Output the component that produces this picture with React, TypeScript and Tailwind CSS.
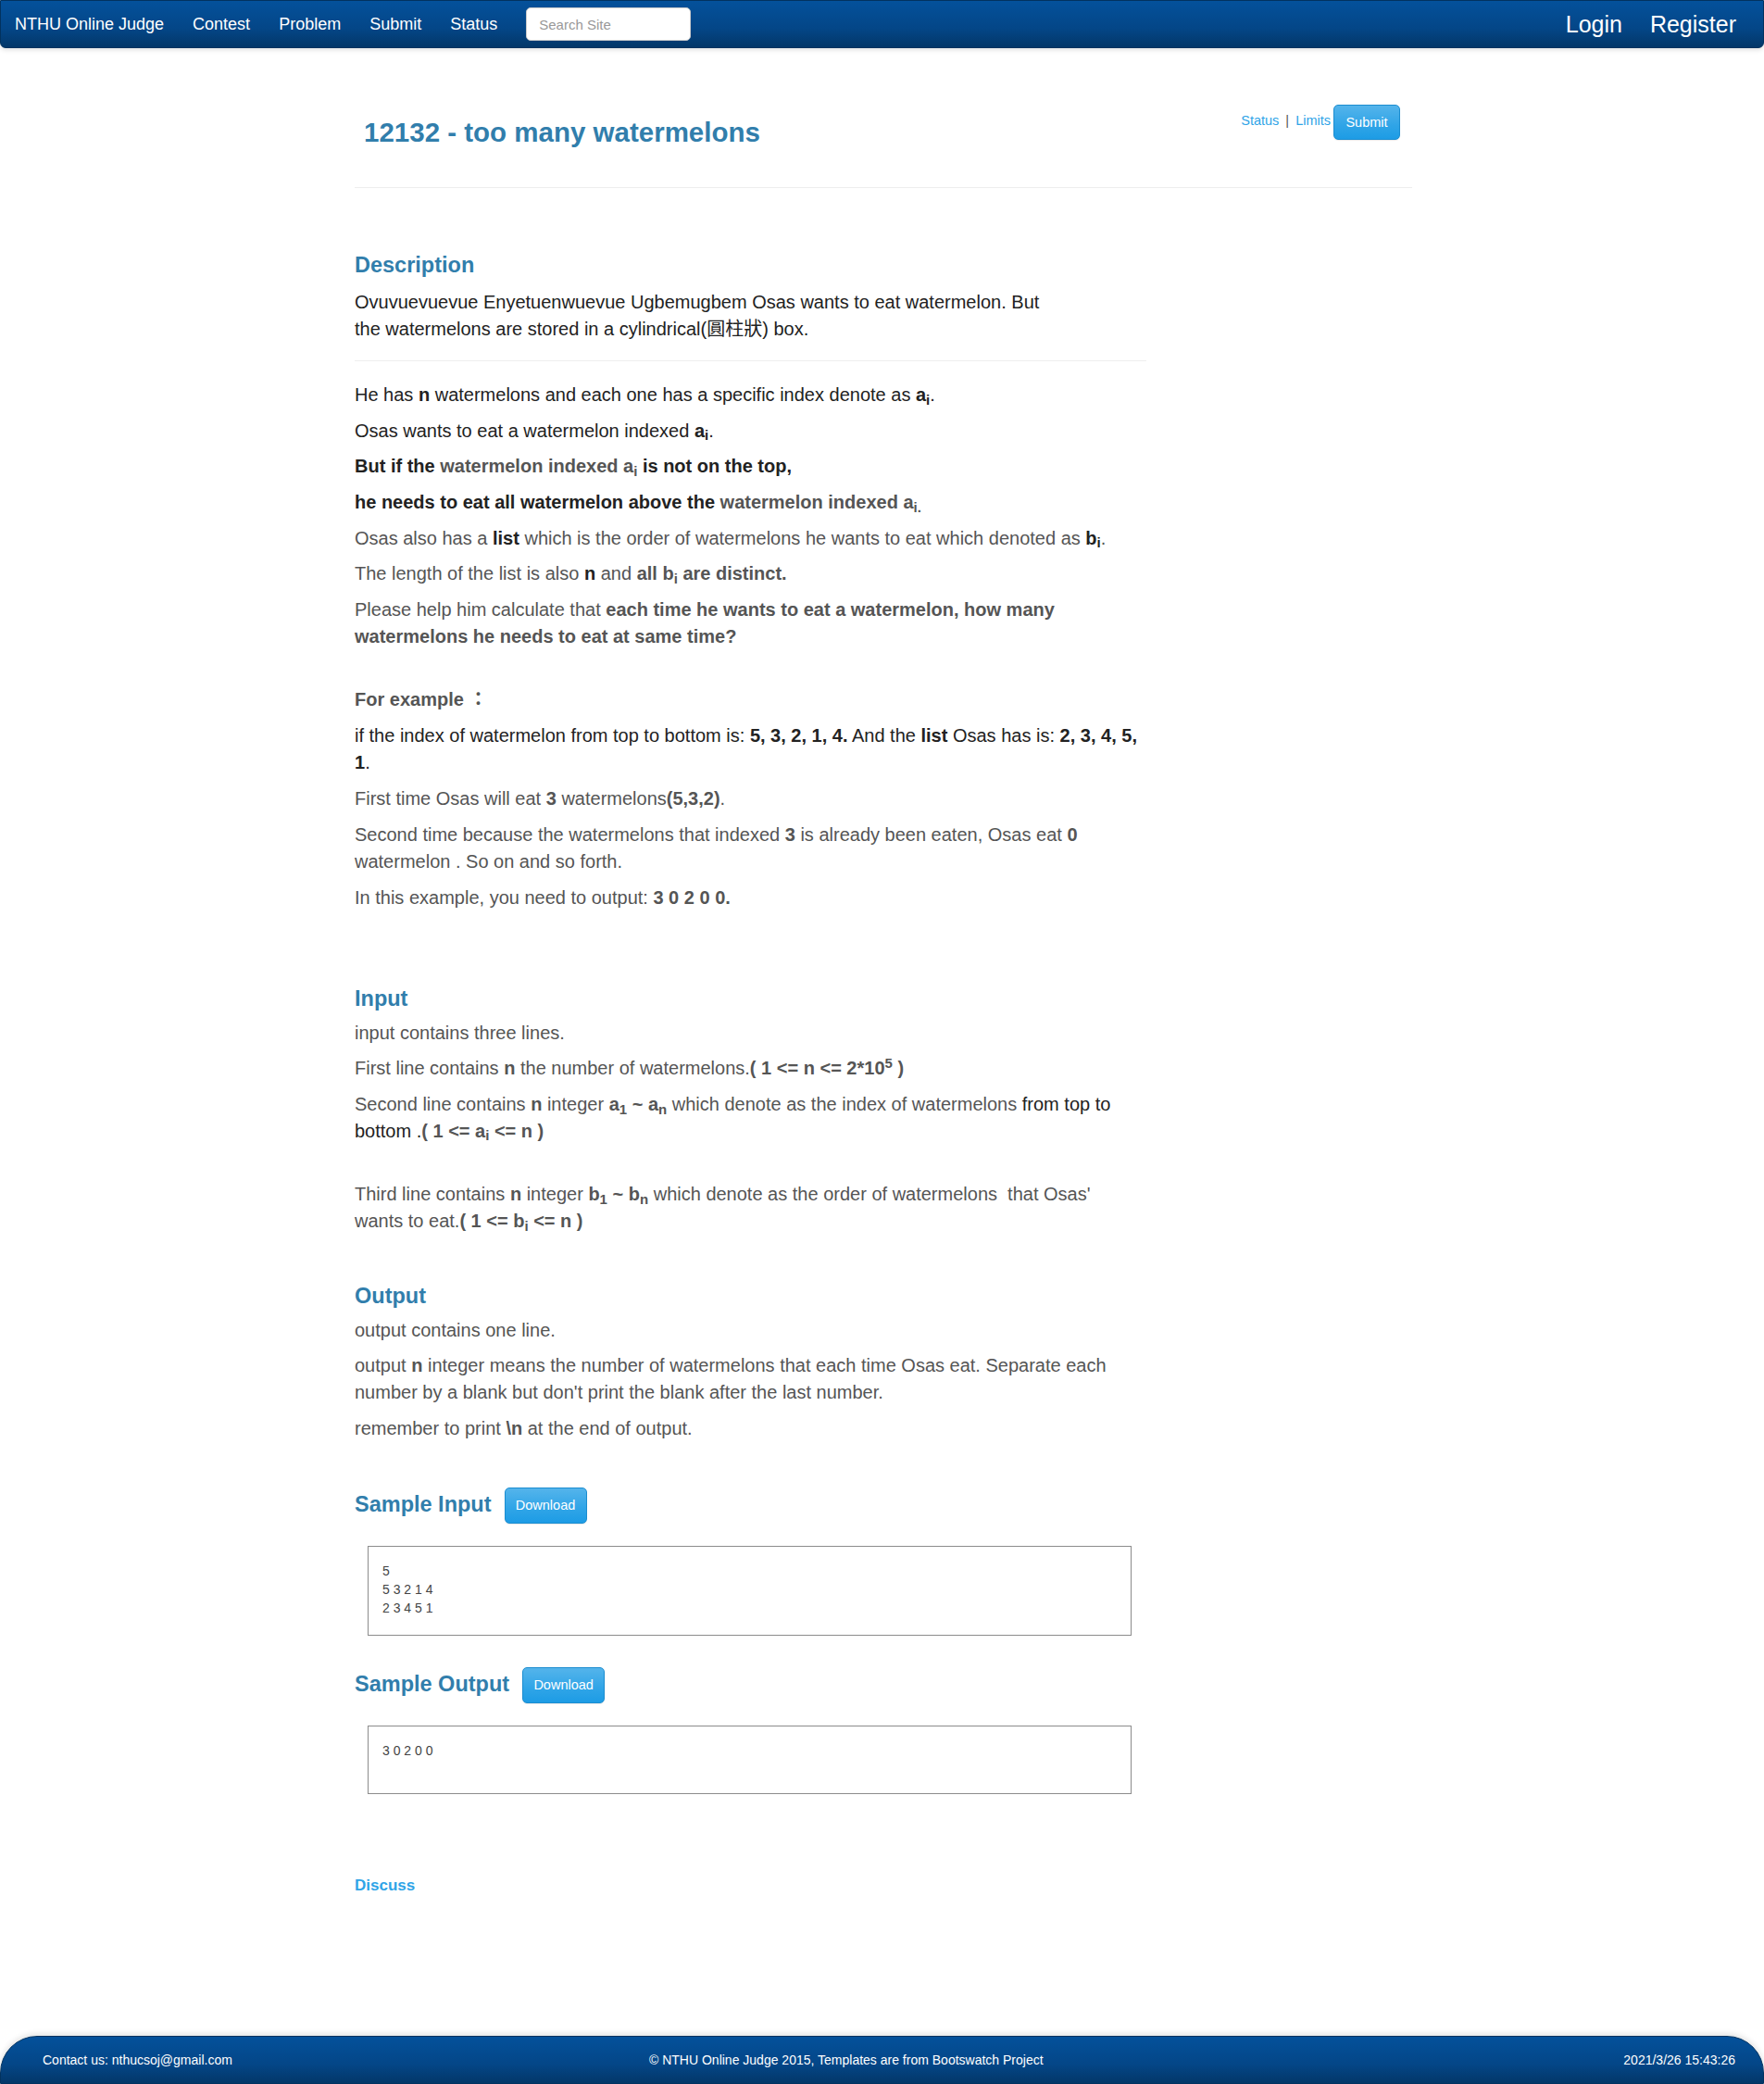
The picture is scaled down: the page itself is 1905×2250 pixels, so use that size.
import React from 'react';

const navGradient = 'bg-[linear-gradient(#04519b,#044687_60%,#033769)]';
const btnBlue =
  'rounded-[5px] border border-[#1b8dd0] bg-[linear-gradient(#54b4eb,#2fa4e7_60%,#1d9ce5)] text-white text-[14.5px] shadow-[0_1px_1px_rgba(0,0,0,0.08)]';

const Heading = ({ children, className = '' }: { children: React.ReactNode; className?: string }) => (
  <h4 className={`text-[23.5px] leading-[28px] font-bold text-[#317eac] ${className}`}>{children}</h4>
);

const Sample = ({ title, text, pad }: { title: string; text: string; pad: string }) => (
  <>
    <div className="flex items-center gap-[14px]">
      <Heading>{title}</Heading>
      <button className={`mt-[2px] h-[39px] w-[89px] ${btnBlue}`}>Download</button>
    </div>
    <div
      className={`mt-[24px] ml-[14px] w-[825px] border border-[#8c8c8c] pl-[15px] text-[14px] leading-[20px] whitespace-pre text-[#444] ${pad}`}
    >
      {text}
    </div>
  </>
);

export default function App() {
  return (
    <div className="flex min-h-[2250px] flex-col bg-white font-['Liberation_Sans','Noto_Sans_CJK_TC',Arial,sans-serif] text-[20px] leading-[28.7px] text-[#555]">
      <nav
        className={`flex h-[52px] items-center rounded-b-[6px] border border-[#02325f] pl-[15px] pr-[29px] text-white shadow-[0_2px_5px_rgba(0,0,0,0.12)] ${navGradient}`}
      >
        <div className="flex items-center gap-[31px] text-[18px]">
          <span className="text-[18px]">NTHU Online Judge</span>
          <span>Contest</span>
          <span>Problem</span>
          <span>Submit</span>
          <span>Status</span>
          <input
            placeholder="Search Site"
            className="h-[36px] w-[178px] rounded-[5px] border border-[#ccc] bg-white pl-[13px] text-[15px] text-[#555] placeholder:text-[#999] outline-none"
          />
        </div>
        <div className="ml-auto flex items-center gap-[30px] text-[25px]">
          <span>Login</span>
          <span>Register</span>
        </div>
      </nav>

      <main className="ml-[383px] w-[1142px] flex-1">
        <div className="flex h-[151px] justify-between border-b border-[#eee] pt-[61px]">
          <h3 className="mt-[14px] pl-[10px] text-[29.5px] leading-[32px] font-bold text-[#317eac]">
            12132 - too many watermelons
          </h3>
          <div className="flex items-start pr-[13px] text-[14.5px] leading-[20px]">
            <span className="mt-[7px] text-[#2fa4e7]">Status</span>
            <span className="mx-[7px] mt-[7px] text-[#555]">|</span>
            <span className="mt-[7px] text-[#2fa4e7]">Limits</span>
            <button className={`ml-[3px] h-[38px] w-[72px] ${btnBlue}`}>Submit</button>
          </div>
        </div>

        <section className="w-[855px]">
          <Heading className="mt-[69px] mb-[12px]">Description</Heading>
          <p className="text-[#222]">
            Ovuvuevuevue Enyetuenwuevue Ugbemugbem Osas wants to eat watermelon. But
            <br />
            the watermelons are stored in a cylindrical(圓柱狀) box.
          </p>
          <hr className="mt-[20px] mb-[21.5px] border-t border-[#eee]" />

          <p className="mb-[10px] text-[#222]">
            He has <b>n</b> watermelons and each one has a specific index denote as <b>a<sub>i</sub></b>.
          </p>
          <p className="mb-[10px] text-[#222]">
            Osas wants to eat a watermelon indexed <b>a<sub>i</sub></b>.
          </p>
          <p className="mb-[10px] font-bold text-[#222]">
            But if the <span className="text-[#555]">watermelon indexed a<sub>i</sub></span> is not on the top,
          </p>
          <p className="mb-[10px] font-bold text-[#222]">
            he needs to eat all watermelon above the{' '}
            <span className="text-[#555]">
              watermelon indexed a<sub>i.</sub>
            </span>
          </p>
          <p className="mb-[10px]">
            Osas also has a <b className="text-[#222]">list</b> which is the order of watermelons he wants to eat which
            denoted as <b className="text-[#222]">b<sub>i</sub></b>.
          </p>
          <p className="mb-[10px]">
            The length of the list is also <b className="text-[#222]">n</b> and{' '}
            <b>
              all b<sub>i</sub> are distinct.
            </b>
          </p>
          <p className="mb-[39.5px]">
            Please help him calculate that{' '}
            <b>each time he wants to eat a watermelon, how many watermelons he needs to eat at same time?</b>
          </p>
          <p className="mb-[10.4px] font-bold">For example ：</p>
          <p className="mb-[10.4px] text-[#222]">
            if the index of watermelon from top to bottom is: <b>5, 3, 2, 1, 4.</b> And the <b>list</b> Osas has is:{' '}
            <b>2, 3, 4, 5, 1</b>.
          </p>
          <p className="mb-[10.4px]">
            First time Osas will eat <b>3</b> watermelons<b>(5,3,2)</b>.
          </p>
          <p className="mb-[10.4px]">
            Second time because the watermelons that indexed <b>3</b> is already been eaten, Osas eat <b>0</b>{' '}
            watermelon . So on and so forth.
          </p>
          <p className="mb-[10px]">
            In this example, you need to output: <b>3 0 2 0 0.</b>
          </p>

          <Heading className="mt-[80px] mb-[9px]">Input</Heading>
          <p className="mb-[10px]">input contains three lines.</p>
          <p className="mb-[10px]">
            First line contains <b>n</b> the number of watermelons.
            <b>
              ( 1 &lt;= n &lt;= 2*10<sup>5</sup> )
            </b>
          </p>
          <p className="mb-[40px]">
            Second line contains <b>n</b> integer{' '}
            <b>
              a<sub>1</sub> ~ a<sub>n</sub>
            </b>{' '}
            which denote as the index of watermelons <span className="text-[#222]">from top to bottom .</span>
            <b>
              ( 1 &lt;= a<sub>i</sub> &lt;= n )
            </b>
          </p>
          <p className="mb-[10px] pr-[10px]">
            Third line contains <b>n</b> integer{' '}
            <b>
              b<sub>1</sub> ~ b<sub>n</sub>
            </b>{' '}
            which denote as the order of watermelons&nbsp; that Osas' wants to eat.
            <b>
              ( 1 &lt;= b<sub>i</sub> &lt;= n )
            </b>
          </p>

          <Heading className="mt-[52px] mb-[9px]">Output</Heading>
          <p className="mb-[10px]">output contains one line.</p>
          <p className="mb-[10px]">
            output <b>n</b> integer means the number of watermelons that each time Osas eat. Separate each number by a
            blank but don't print the blank after the last number.
          </p>
          <p className="mb-[47px]">
            remember to print <b>\n</b> at the end of output.
          </p>

          <Sample title="Sample Input" text={'5\n5 3 2 1 4\n2 3 4 5 1'} pad="pt-[16px] pb-[19px]" />
          <div className="h-[32px]" />
          <Sample title="Sample Output" text={'3 0 2 0 0\n '} pad="pt-[16px] pb-[16px]" />

          <div className="mt-[85px] mb-[140px] text-[17px] leading-[28px] font-bold text-[#2fa4e7]">Discuss</div>
        </section>
      </main>

      <footer
        className={`flex h-[52px] items-center rounded-t-[40px] border border-[#02325f] pl-[45px] pr-[30px] text-[14px] text-white shadow-[0_-2px_6px_rgba(0,0,0,0.12)] ${navGradient}`}
      >
        <span className="w-[655px] shrink-0">Contact us: nthucsoj@gmail.com</span>
        <span>© NTHU Online Judge 2015, Templates are from Bootswatch Project</span>
        <span className="ml-auto">2021/3/26 15:43:26</span>
      </footer>
    </div>
  );
}
